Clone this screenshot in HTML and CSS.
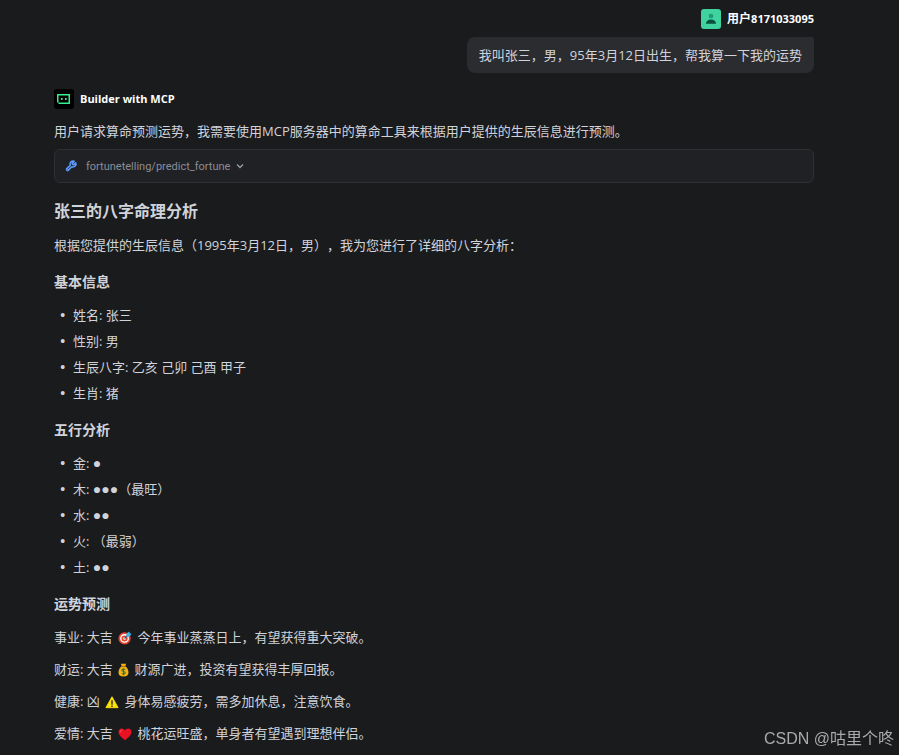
FILE: index.html
```
<!DOCTYPE html>
<html lang="zh-CN">
<head>
    <meta charset="UTF-8">
    <meta name="viewport" content="width=device-width, initial-scale=1.0">
    <title>Builder with MCP</title>
    <link rel="stylesheet" href="styles.css">
</head>
<body>
    <main class="chat">
        <section class="message-user">
            <header class="sender">
                <svg class="avatar" viewBox="0 0 20 20" aria-hidden="true">
                    <rect width="20" height="20" rx="3" fill="#3fd3a0"/>
                    <circle cx="10" cy="7" r="2.3" fill="#229873"/>
                    <path d="M5 14.8c0-2.600 2-4.300 5-4.300s5 1.700 5 4.300z" fill="#07503a"/>
                </svg>
                <span class="sender-name">用户<span class="latin">8171033095</span></span>
            </header>
            <p class="bubble">我叫张三，男，95年3月12日出生，帮我算一下我的运势</p>
        </section>

        <section class="message-agent">
            <header class="sender">
                <svg class="avatar" viewBox="0 0 20 20" aria-hidden="true">
                    <rect width="20" height="20" rx="3" fill="#000"/>
                    <path d="M3 5h13v10H4.500v-1.500H3z" fill="#32f08c"/>
                    <path d="M4.500 6.500h10v7h-10z" fill="#000"/>
                    <path d="M7 9h1.600v2H7zM11 9h1.600v2H11z" fill="#32f08c"/>
                </svg>
                <span class="sender-name latin">Builder with MCP</span>
            </header>
            <p>用户请求算命预测运势，我需要使用MCP服务器中的算命工具来根据用户提供的生辰信息进行预测。</p>

            <button type="button" class="tool-call">
                <svg class="tool-icon" viewBox="0 0 24 24" aria-hidden="true">
                    <path d="M14.700 6.300a1 1 0 0 0 0 1.400l1.600 1.600a1 1 0 0 0 1.400 0l3.800-3.800a6 6 0 0 1-7.900 7.900l-6.900 6.900a2.100 2.100 0 0 1-3-3l6.900-6.900a6 6 0 0 1 7.900-7.900z"/>
                </svg>
                <span class="tool-name">fortunetelling/predict_fortune</span>
                <svg class="chevron" viewBox="0 0 8 8" aria-hidden="true">
                    <path d="M1 2.500l3 3 3-3"/>
                </svg>
            </button>

            <h2>张三的八字命理分析</h2>
            <p>根据您提供的生辰信息（1995年3月12日，男），我为您进行了详细的八字分析：</p>

            <h3>基本信息</h3>
            <ul>
                <li>姓名: 张三</li>
                <li>性别: 男</li>
                <li>生辰八字: 乙亥 己卯 己酉 甲子</li>
                <li>生肖: 猪</li>
            </ul>

            <h3>五行分析</h3>
            <ul>
                <li>金: <span class="dots">●</span></li>
                <li>木: <span class="dots">●●●</span>（最旺）</li>
                <li>水: <span class="dots">●●</span></li>
                <li>火: （最弱）</li>
                <li>土: <span class="dots">●●</span></li>
            </ul>

            <h3>运势预测</h3>
            <p>事业: 大吉
                <svg class="emoji" viewBox="0 0 16 16" role="img" aria-label="靶心">
                    <circle cx="7.500" cy="8.500" r="7" fill="#e5442f"/>
                    <circle cx="7.500" cy="8.500" r="5" fill="#fff"/>
                    <circle cx="7.500" cy="8.500" r="3.500" fill="#e5442f"/>
                    <circle cx="7.500" cy="8.500" r="1.500" fill="#fff"/>
                    <path d="M7.500 8.500L12 4" stroke="#16648c" stroke-width="1.500"/>
                    <path d="M9.500 6l.5-3.500L13 .5l.5 2 2 .5-2 3-3.500.5z" fill="#35b8ee"/>
                </svg>
                今年事业蒸蒸日上，有望获得重大突破。</p>
            <p>财运: 大吉
                <svg class="emoji emoji-narrow" viewBox="0 0 12 16" role="img" aria-label="钱袋">
                    <path d="M3 .8h6l-1 3c2.500 1.700 3.700 4.500 3.700 7 0 3-1.700 4.700-5.700 4.700S.3 13.800.3 10.800c0-2.500 1.200-5.300 3.700-7z" fill="#f6b012"/>
                    <path d="M3.500 4h5" stroke="#a56612" stroke-width="1.200"/>
                    <path d="M8 7.500c-1-1-4-.8-4 .9 0 1.900 4 .9 4 2.800 0 1.700-3 1.900-4 .8M6 6v8" fill="none" stroke="#28763a" stroke-width="1.200"/>
                </svg>
                财源广进，投资有望获得丰厚回报。</p>
            <p>健康: 凶
                <svg class="emoji" viewBox="0 0 16 16" role="img" aria-label="警告">
                    <path d="M8 2l7 12.500H1z" fill="#fce10a" stroke="#fce10a" stroke-linejoin="round"/>
                    <path d="M7.200 6h1.600v5H7.200zM7.200 12h1.600v1.600H7.200z" fill="#2b2b20"/>
                </svg>
                身体易感疲劳，需多加休息，注意饮食。</p>
            <p>爱情: 大吉
                <svg class="emoji" viewBox="0 0 16 16" role="img" aria-label="红心">
                    <path d="M8 15C3.500 11.500.5 8.800.5 5.700.5 3.300 2.300 1.800 4.300 1.800 6 1.800 7.300 2.700 8 4c.7-1.300 2-2.200 3.700-2.200 2 0 3.800 1.500 3.800 3.900 0 3.100-3 5.800-7.500 9.300z" fill="#e81224"/>
                    <path d="M2.500 6c0-1.200.8-2.200 2-2.200" fill="none" stroke="#f77" stroke-width="1"/>
                </svg>
                桃花运旺盛，单身者有望遇到理想伴侣。</p>
        </section>
    </main>
    <div class="watermark">CSDN @咕里个咚</div>
</body>
</html>
```
FILE: styles.css
```
* {
    box-sizing: border-box;
}
body {
    margin: 0;
    background-color: #1a1b1d;
    color: #d1d3db;
    font-family: "Open Sans", "Noto Sans CJK SC", sans-serif;
    font-size: 13px;
    line-height: 20px;
    text-spacing-trim: space-all;
}
.chat {
    padding: 9px 85px 0 54px;
}
.message-user {
    display: flex;
    flex-direction: column;
    align-items: flex-end;
    gap: 8px;
    margin-bottom: 16px;
}
.sender {
    display: flex;
    align-items: center;
    gap: 6px;
}
.message-agent .sender {
    margin-bottom: 12px;
}
.avatar {
    width: 20px;
    height: 20px;
}
.sender-name {
    color: #fff;
    font-size: 12px;
    font-weight: bold;
}
.latin {
    font-size: 11px;
}
p {
    margin: 0 0 12px;
}
.bubble {
    margin: 0;
    padding: 8px 12px;
    border-radius: 8px 2px 8px 8px;
    background-color: #2b2c30;
}
.tool-call {
    display: flex;
    align-items: center;
    width: 100%;
    height: 34px;
    margin: -4px 0 16px;
    padding: 0 10px;
    border: 1px solid #2f3034;
    border-radius: 6px;
    background-color: #202124;
    color: #8b8d96;
    text-align: left;
    cursor: pointer;
}
.tool-name {
    font-family: Roboto, sans-serif;
    font-size: 11px;
}
.tool-icon {
    width: 12px;
    height: 12px;
    margin-right: 9px;
    fill: none;
    stroke: #5c9dff;
    stroke-width: 3;
    stroke-linejoin: round;
    overflow: visible;
}
.chevron {
    width: 8px;
    height: 8px;
    margin-left: 6px;
    fill: none;
    stroke: #9a9ca5;
    stroke-width: 1.3;
}
h2 {
    margin: 0 0 12px;
    font-size: 16px;
    line-height: 24px;
}
h3 {
    margin: 16px 0 12px;
    font-size: 14px;
    line-height: 22px;
}
ul {
    display: flex;
    flex-direction: column;
    gap: 6px;
    margin: 0;
    padding-left: 19px;
    list-style-type: "•\00a0\00a0";
}
li::marker {
    font-family: "Liberation Sans", sans-serif;
    font-size: 14px;
}
.dots {
    font-family: "Liberation Sans", sans-serif;
    font-size: 14px;
    line-height: 1;
}
.emoji {
    width: 14px;
    height: 14px;
    margin: 0 2px;
    vertical-align: -3px;
}
.emoji-narrow {
    width: 11px;
}
.watermark {
    position: fixed;
    right: 5px;
    bottom: 4px;
    color: #a9aaab;
    font-family: "Liberation Sans", "Noto Sans CJK SC", sans-serif;
    font-size: 16px;
    line-height: 24px;
}
```
